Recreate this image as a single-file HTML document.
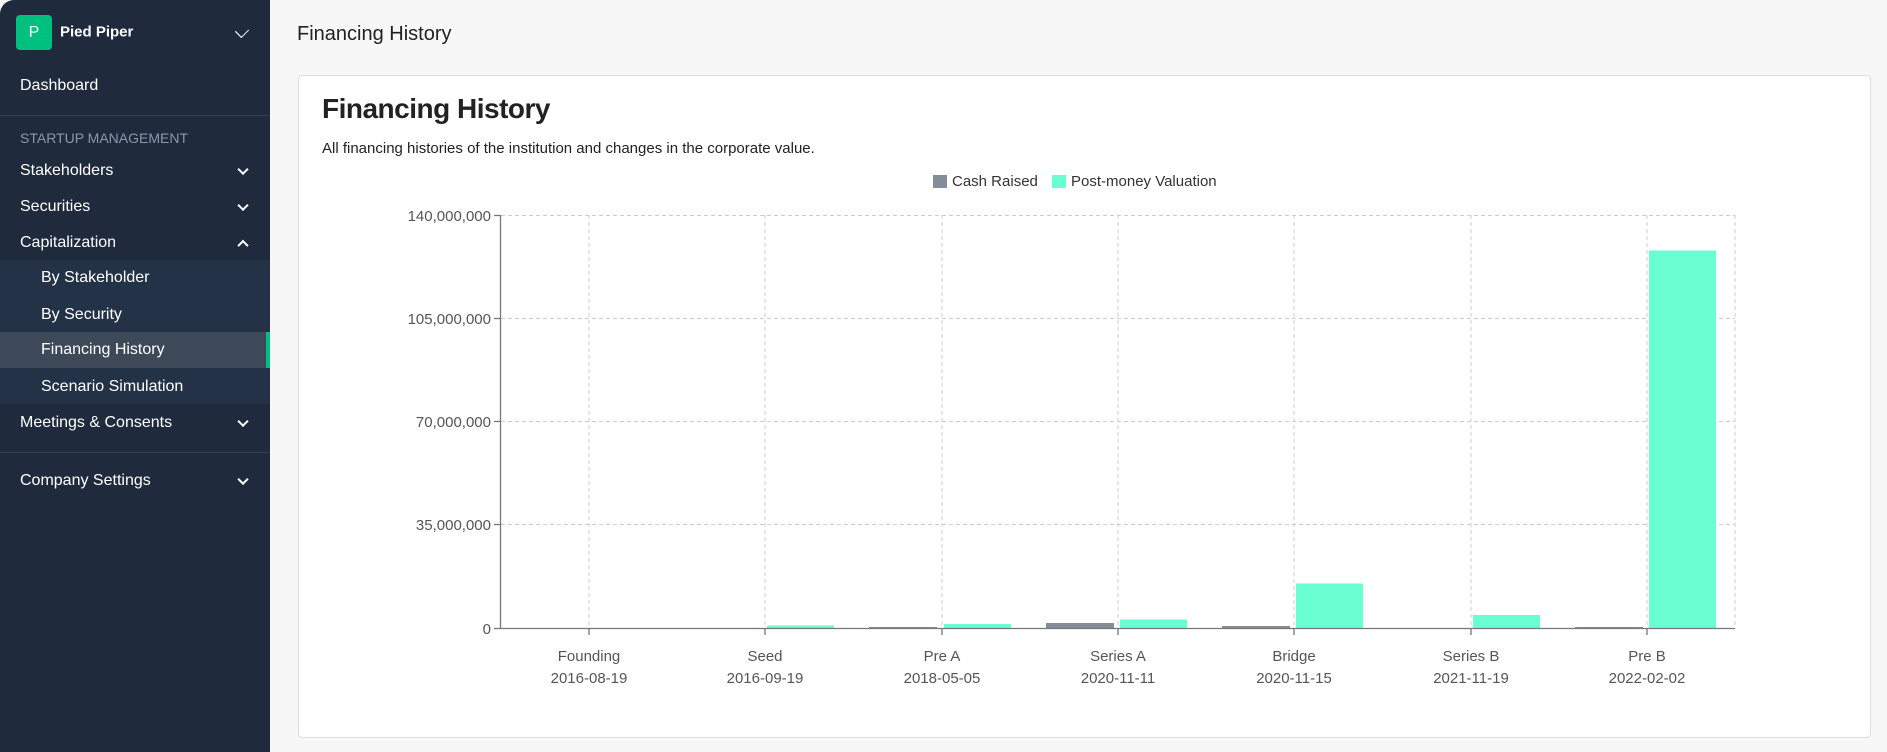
<!DOCTYPE html>
<html><head><meta charset="utf-8"><style>
*{margin:0;padding:0;box-sizing:border-box}
body{width:1887px;height:752px;background:#f7f7f7;font-family:"Liberation Sans",sans-serif;position:relative;overflow:hidden}
.sb{position:absolute;left:0;top:0;width:270px;height:752px;background:#1f2a3d;border-top-left-radius:14px;color:#fff}
.it{position:absolute;left:20px;font-size:16px;color:#fff;transform:translateY(-50%)}
.sub{left:41px}
.chev{position:absolute;left:239px;width:8px;height:8px;border-right:2px solid #fff;border-bottom:2px solid #fff;transform:translateY(-70%) rotate(45deg)}
.up{transform:translateY(-20%) rotate(-135deg)}
.card{position:absolute;left:298px;top:75px;width:1573px;height:663px;background:#fff;border:1px solid #dedede;border-radius:4px}
</style></head><body>
<div class="sb">
 <div style="position:absolute;left:16px;top:15px;width:36px;height:35px;background:#00c07f;border-radius:4px;color:#fff;font-size:16px;text-align:center;line-height:35px">P</div>
 <div class="it" style="left:60px;top:32px;font-weight:bold;font-size:15px">Pied Piper</div>
 <div style="position:absolute;left:237px;top:26px;width:10px;height:10px;border-right:1.5px solid #fff;border-bottom:1.5px solid #fff;transform:rotate(45deg) scale(0.9,1.1)"></div>
 <div class="it" style="top:86px">Dashboard</div>
 <div style="position:absolute;left:0;top:115px;width:270px;height:1px;background:#34405a"></div>
 <div class="it" style="top:138px;font-size:14px;color:#8d96ab">STARTUP MANAGEMENT</div>
 <div class="it" style="top:171px">Stakeholders</div><div class="chev" style="top:171px"></div>
 <div class="it" style="top:207px">Securities</div><div class="chev" style="top:207px"></div>
 <div class="it" style="top:243px">Capitalization</div><div class="chev up" style="top:243px"></div>
 <div style="position:absolute;left:0;top:260px;width:270px;height:144px;background:#243247"></div>
 <div style="position:absolute;left:0;top:332px;width:270px;height:36px;background:#3d4959"></div>
 <div style="position:absolute;left:266px;top:332px;width:4px;height:36px;background:#00c07f"></div>
 <div class="it sub" style="top:278px">By Stakeholder</div>
 <div class="it sub" style="top:315px">By Security</div>
 <div class="it sub" style="top:350px">Financing History</div>
 <div class="it sub" style="top:387px">Scenario Simulation</div>
 <div class="it" style="top:423px">Meetings &amp; Consents</div><div class="chev" style="top:423px"></div>
 <div style="position:absolute;left:0;top:452px;width:270px;height:1px;background:#34405a"></div>
 <div class="it" style="top:481px">Company Settings</div><div class="chev" style="top:481px"></div>
</div>
<div style="position:absolute;left:297px;top:23px;font-size:20px;color:#222">Financing History</div>
<div class="card">
 <div style="position:absolute;left:23px;top:17px;font-size:28px;font-weight:bold;color:#222;letter-spacing:-0.5px">Financing History</div>
 <div style="position:absolute;left:23px;top:64px;font-size:15px;color:#222">All financing histories of the institution and changes in the corporate value.</div>
</div>
<svg style="position:absolute;left:0;top:0" width="1887" height="752">
 <rect x="933" y="175" width="14" height="13" fill="#868b98"/>
 <text x="952" y="186" font-size="15" fill="#333" font-family="Liberation Sans">Cash Raised</text>
 <rect x="1052" y="175" width="14" height="13" fill="#69ffd2"/>
 <text x="1071" y="186" font-size="15" fill="#333" font-family="Liberation Sans">Post-money Valuation</text>
 <g stroke="#ccc" stroke-dasharray="4,3" stroke-width="1">
  <line x1="501" y1="215.5" x2="1735" y2="215.5"/><line x1="501" y1="318.5" x2="1735" y2="318.5"/>
  <line x1="501" y1="421.5" x2="1735" y2="421.5"/><line x1="501" y1="524.5" x2="1735" y2="524.5"/>
  <line x1="589" y1="215" x2="589" y2="628"/><line x1="765" y1="215" x2="765" y2="628"/>
  <line x1="942" y1="215" x2="942" y2="628"/><line x1="1118" y1="215" x2="1118" y2="628"/>
  <line x1="1294" y1="215" x2="1294" y2="628"/><line x1="1471" y1="215" x2="1471" y2="628"/>
  <line x1="1647" y1="215" x2="1647" y2="628"/><line x1="1735" y1="215" x2="1735" y2="628"/>
 </g>
 <g fill="#69ffd2">
  <rect x="767" y="625.5" width="67" height="2.5"/><rect x="944" y="624" width="67" height="4"/>
  <rect x="1120" y="619.5" width="67" height="8.5"/><rect x="1296" y="583.5" width="67" height="44.5"/>
  <rect x="1473" y="615" width="67" height="13"/><rect x="1649" y="250.5" width="67" height="377.5"/>
 </g>
 <g fill="#868b98">
  <rect x="1046" y="623" width="68" height="5"/><rect x="1222" y="626" width="68" height="2"/>
  <rect x="869" y="627" width="68" height="1"/><rect x="1575" y="627" width="68" height="1"/>
 </g>
 <g stroke="#777" stroke-width="1.3">
  <line x1="500.5" y1="215" x2="500.5" y2="629"/><line x1="500" y1="628.5" x2="1735" y2="628.5"/>
  <line x1="494" y1="215.5" x2="500" y2="215.5"/><line x1="494" y1="318.5" x2="500" y2="318.5"/>
  <line x1="494" y1="421.5" x2="500" y2="421.5"/><line x1="494" y1="524.5" x2="500" y2="524.5"/><line x1="494" y1="628.5" x2="500" y2="628.5"/>
  <line x1="589" y1="628" x2="589" y2="635"/><line x1="765" y1="628" x2="765" y2="635"/><line x1="942" y1="628" x2="942" y2="635"/>
  <line x1="1118" y1="628" x2="1118" y2="635"/><line x1="1294" y1="628" x2="1294" y2="635"/><line x1="1471" y1="628" x2="1471" y2="635"/><line x1="1647" y1="628" x2="1647" y2="635"/>
 </g>
 <g font-family="Liberation Sans" font-size="15" fill="#555" text-anchor="end">
  <text x="491" y="221">140,000,000</text><text x="491" y="324">105,000,000</text>
  <text x="491" y="427">70,000,000</text><text x="491" y="530">35,000,000</text><text x="491" y="634">0</text>
 </g>
 <g font-family="Liberation Sans" font-size="15" fill="#555" text-anchor="middle">
  <text x="589" y="661">Founding</text><text x="589" y="683">2016-08-19</text>
  <text x="765" y="661">Seed</text><text x="765" y="683">2016-09-19</text>
  <text x="942" y="661">Pre A</text><text x="942" y="683">2018-05-05</text>
  <text x="1118" y="661">Series A</text><text x="1118" y="683">2020-11-11</text>
  <text x="1294" y="661">Bridge</text><text x="1294" y="683">2020-11-15</text>
  <text x="1471" y="661">Series B</text><text x="1471" y="683">2021-11-19</text>
  <text x="1647" y="661">Pre B</text><text x="1647" y="683">2022-02-02</text>
 </g>
</svg>
</body></html>
